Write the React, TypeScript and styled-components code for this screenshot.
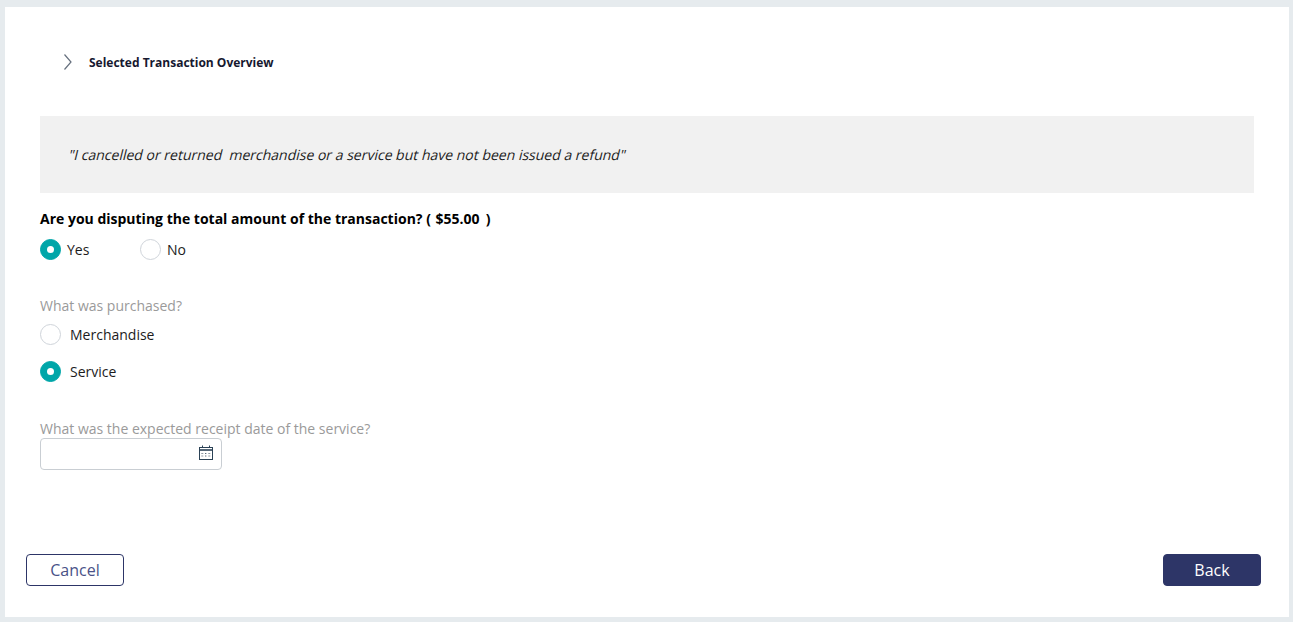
import React from "react";
import styled, { createGlobalStyle } from "styled-components";

const GlobalStyle = createGlobalStyle`
  html, body {
    margin: 0;
    padding: 0;
    background: #e6ebee;
    font-family: "Open Sans", "Liberation Sans", sans-serif;
  }
`;

const Page = styled.div`
  width: 1293px;
  height: 622px;
  box-sizing: border-box;
  padding: 7px 4px 5px 5px;
  overflow: hidden;
`;

const Panel = styled.main`
  height: 100%;
  background: #fff;
  display: flex;
  flex-direction: column;
`;

const Overview = styled.button`
  display: flex;
  align-items: center;
  align-self: flex-start;
  height: 20px;
  margin: 45px 0 0 58px;
  padding: 0;
  border: 0;
  background: none;
  font: inherit;
  cursor: pointer;
`;

const Chevron = styled.svg`
  width: 12px;
  height: 18px;
  margin-right: 14px;
  flex: none;
`;

const OverviewTitle = styled.span`
  font-size: 12px;
  font-weight: 700;
  color: #16182f;
`;

const Content = styled.div`
  padding: 0 35px;
  margin-top: 44px;
  flex: 1;
`;

const Quote = styled.div`
  height: 77px;
  background: #f1f1f1;
  display: flex;
  align-items: center;
  padding-left: 29px;
`;

/* the original slants the upright face, the real italic is narrower */
const QuoteText = styled.span`
  display: inline-block;
  font-size: 14px;
  color: #1c1c1c;
  white-space: pre;
  transform: skewX(-14deg);
`;

const Question = styled.div`
  margin-top: 16px;
  height: 20px;
  line-height: 20px;
  font-size: 14px;
  font-weight: 700;
  color: #000;
  white-space: pre;
`;

const Amount = styled.span`
  margin: 0 -1px 0 1px;
`;

const InlineOptions = styled.div`
  display: flex;
  margin-top: 10px;
`;

const StackedOptions = styled.div`
  display: flex;
  flex-direction: column;
  gap: 16px;
  margin-top: 8px;
`;

const Option = styled.label<{ $width?: number; $gap: number }>`
  display: flex;
  align-items: center;
  gap: ${(p) => p.$gap}px;
  width: ${(p) => (p.$width ? `${p.$width}px` : "auto")};
  height: 21px;
  font-size: 14px;
  color: #1c1c1c;
`;

const RadioDot = styled.span<{ $checked?: boolean }>`
  width: 21px;
  height: 21px;
  box-sizing: border-box;
  border-radius: 50%;
  flex: none;
  display: flex;
  align-items: center;
  justify-content: center;
  background: ${(p) => (p.$checked ? "#00a6a9" : "#fff")};
  border: 1px solid ${(p) => (p.$checked ? "#00a6a9" : "#cfd4da")};

  &::after {
    content: "";
    width: 7px;
    height: 7px;
    border-radius: 50%;
    background: #fff;
    display: ${(p) => (p.$checked ? "block" : "none")};
  }
`;

const FieldLabel = styled.div<{ $top: number }>`
  margin-top: ${(p) => p.$top}px;
  height: 20px;
  line-height: 20px;
  font-size: 14px;
  color: #9a9a9a;
`;

const DateField = styled.div`
  width: 182px;
  height: 32px;
  margin-top: -1px;
  box-sizing: border-box;
  border: 1px solid #c9ced3;
  border-radius: 4px;
  display: flex;
  align-items: center;
  justify-content: flex-end;
  padding: 0 7px 2px 0;
`;

const Footer = styled.footer`
  display: flex;
  justify-content: space-between;
  padding: 0 28px 31px 21px;
`;

const ActionButton = styled.button<{ $primary?: boolean }>`
  width: 98px;
  height: 32px;
  box-sizing: border-box;
  border: 1px solid #2d3567;
  border-radius: 4px;
  background: ${(p) => (p.$primary ? "#2d3567" : "#fff")};
  color: ${(p) => (p.$primary ? "#fff" : "#4a5288")};
  font-family: inherit;
  font-size: 16px;
  padding: 0;
`;

const CalendarIcon = () => (
  <svg width="16" height="16" viewBox="0 0 16 16" fill="none">
    <rect x="1.5" y="2.5" width="13" height="12" stroke="#2b4256" />
    <path d="M1.5 5H14.5" stroke="#2b4256" strokeWidth="1.6" />
    <path d="M4.5 0.5V2.5M11.5 0.5V2.5" stroke="#2b4256" />
    <path
      d="M3.5 8.5h2M7 8.5h2M10.5 8.5h2M3.5 11h2M7 11h2M10.5 11h2"
      stroke="#5f6d7b"
      strokeDasharray="1.2 .6"
    />
  </svg>
);

export default function App() {
  return (
    <Page>
      <GlobalStyle />
      <Panel>
        <Overview>
          <Chevron viewBox="0 0 12 18" fill="none">
            <path d="M1.5 1.5L8 9L1.5 16.5" stroke="#66707e" strokeWidth="1.2" />
          </Chevron>
          <OverviewTitle>Selected Transaction Overview</OverviewTitle>
        </Overview>
        <Content>
          <Quote>
            <QuoteText>"I cancelled or returned  merchandise or a service but have not been issued a refund"</QuoteText>
          </Quote>
          <Question>
            Are you disputing the total amount of the transaction? ( <Amount>$55.00</Amount>  )
          </Question>
          <InlineOptions>
            <Option $width={100} $gap={6}>
              <RadioDot $checked />
              Yes
            </Option>
            <Option $gap={6}>
              <RadioDot />
              No
            </Option>
          </InlineOptions>
          <FieldLabel $top={36}>What was purchased?</FieldLabel>
          <StackedOptions>
            <Option $gap={9}>
              <RadioDot />
              Merchandise
            </Option>
            <Option $gap={9}>
              <RadioDot $checked />
              Service
            </Option>
          </StackedOptions>
          <FieldLabel $top={37}>What was the expected receipt date of the service?</FieldLabel>
          <DateField>
            <CalendarIcon />
          </DateField>
        </Content>
        <Footer>
          <ActionButton>Cancel</ActionButton>
          <ActionButton $primary>Back</ActionButton>
        </Footer>
      </Panel>
    </Page>
  );
}
